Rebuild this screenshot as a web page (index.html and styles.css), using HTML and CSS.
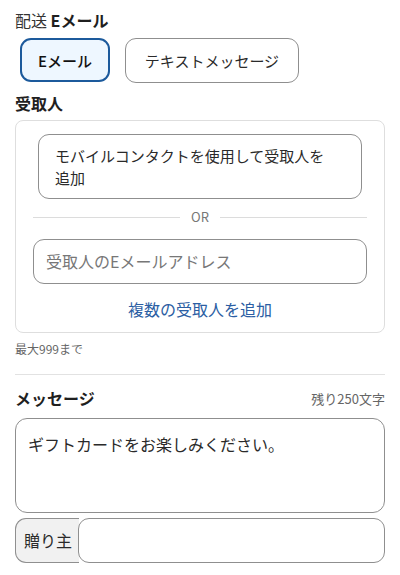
FILE: index.html
```html
<!DOCTYPE html>
<html lang="ja">
<head>
<meta charset="utf-8">
<link rel="stylesheet" href="styles.css">
</head>
<body>
<div class="page">
  <div class="title"><span class="title-label">配送</span> <b>Eメール</b></div>
  <div class="toggle-row">
    <button class="toggle active">Eメール</button>
    <button class="toggle">テキストメッセージ</button>
  </div>
  <div class="section-head">受取人</div>
  <div class="card">
    <div class="contact-wrap">
      <button class="contact-btn">モバイルコンタクトを使用して受取人を追加</button>
    </div>
    <div class="or-row"><span class="or-line"></span><span class="or-text">OR</span><span class="or-line"></span></div>
    <div class="field">受取人のEメールアドレス</div>
    <div class="add-link">複数の受取人を追加</div>
  </div>
  <div class="hint">最大999まで</div>
  <div class="divider"></div>
  <div class="msg-head"><span class="msg-title">メッセージ</span><span class="msg-count">残り250文字</span></div>
  <div class="textarea">ギフトカードをお楽しみください。</div>
  <div class="from-row">
    <div class="from-label">贈り主</div>
    <div class="from-input"></div>
  </div>
</div>
</body>
</html>
```

FILE: styles.css
```css
* { box-sizing: border-box; }
html, body { margin: 0; padding: 0; background: #fff; }
body {
  font-family: "Noto Sans CJK JP", "Noto Sans", sans-serif;
  color: #1f1f1f;
  width: 400px;
}
.page { padding: 10px 15px 0 15px; }
.title { font-size: 16px; line-height: 20px; height: 20px; }
.title-label { color: #333; }
.title b { font-weight: 700; }
.toggle-row { display: flex; gap: 15px; margin-top: 8px; padding-left: 5px; }
.toggle {
  font-family: inherit;
  font-size: 15px;
  height: 45px;
  width: 174px;
  padding: 0;
  border: 1px solid #8f8f8f;
  border-radius: 11px;
  background: #fff;
  color: #2a2a2a;
  margin: 0;
}
.toggle.active {
  border: 2.5px solid #1c5a9c;
  background: #eef7ff;
  width: 90px;
  height: 44px;
  font-weight: 500;
  color: #111;
}
.section-head { font-size: 16px; font-weight: 700; line-height: 20px; margin-top: 10px; }
.card {
  margin-top: 7px;
  border: 1px solid #dedede;
  border-radius: 8px;
  padding: 13px 17px 0 17px;
  height: 213px;
}
.contact-wrap { padding: 0 5px; }
.contact-btn {
  display: block;
  width: 100%;
  text-align: left;
  font-family: inherit;
  font-size: 15px;
  line-height: 22px;
  color: #2a2a2a;
  background: #fff;
  border: 1px solid #8f8f8f;
  border-radius: 11px;
  padding: 10px 30px 10px 16px;
  height: 65px;
  margin: 0;
}
.or-row { display: flex; align-items: center; gap: 11px; margin-top: 8px; height: 20px; }
.or-line { flex: 1; height: 1px; background: #dcdcdc; }
.or-text { font-size: 13px; color: #777; line-height: 20px; }
.field {
  margin-top: 12px;
  height: 45px;
  border: 1px solid #8f8f8f;
  border-radius: 11px;
  font-size: 16px;
  color: #777;
  line-height: 43px;
  padding-left: 12px;
}
.add-link {
  margin-top: 14px;
  text-align: center;
  font-size: 16px;
  color: #2b5ea3;
  line-height: 22px;
}
.hint { font-size: 12px; color: #666; margin-top: 7px; line-height: 18px; }
.divider { height: 1px; background: #e2e2e2; margin-top: 16px; }
.msg-head { display: flex; justify-content: space-between; align-items: flex-end; margin-top: 12px; height: 22px; }
.msg-title { font-size: 16px; font-weight: 700; line-height: 22px; }
.msg-count { font-size: 13px; color: #666; line-height: 20px; }
.textarea {
  margin-top: 9px;
  height: 95px;
  border: 1px solid #8f8f8f;
  border-radius: 12px;
  font-size: 16px;
  color: #2a2a2a;
  padding: 13px 12px;
  line-height: 24px;
}
.from-row { display: flex; margin-top: 5px; height: 45px; }
.from-label {
  width: 64px;
  background: #f1f1f1;
  border: 1px solid #8f8f8f;
  border-right: none;
  border-radius: 11px 0 0 11px;
  font-size: 16px;
  color: #2a2a2a;
  line-height: 43px;
  padding-left: 8px;
}
.from-input {
  flex: 1;
  border: 1px solid #8f8f8f;
  border-radius: 11px;
  background: #fff;
  margin-left: -1px;
}
```
